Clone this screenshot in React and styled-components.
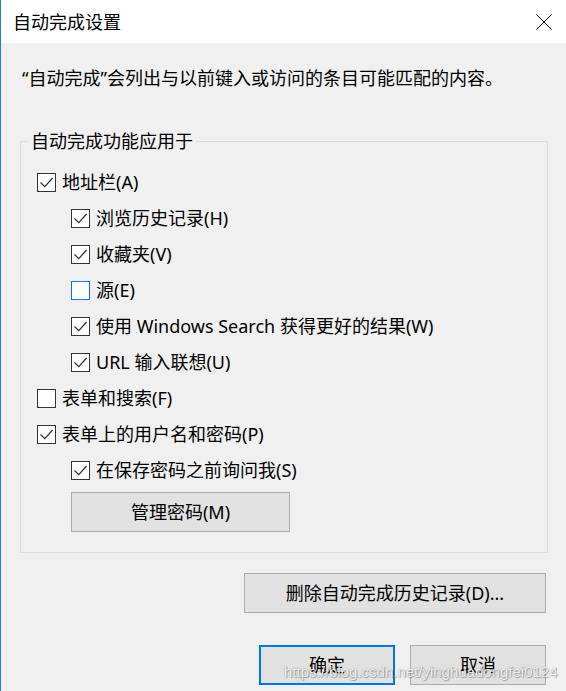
import React from 'react'
import styled, { createGlobalStyle } from 'styled-components'

const GlobalStyle = createGlobalStyle`
  html, body {
    margin: 0;
    padding: 0;
    background: #f0f0f0;
  }
  body {
    font-family: "Noto Sans", "Noto Sans CJK SC", sans-serif;
  }
`

const Window = styled.div`
  position: relative;
  width: 566px;
  height: 691px;
  box-sizing: border-box;
  border-left: 1px solid #1883d7;
  background: #f0f0f0;
  color: #000;
  display: flex;
  flex-direction: column;
  overflow: hidden;
`

const TitleBar = styled.div`
  height: 43px;
  flex-shrink: 0;
  background: #fff;
  display: flex;
  align-items: center;
  justify-content: space-between;
  padding: 0 14px 0 12px;
  font-size: 18px;
  line-height: 24px;
`

const CloseIcon = styled.svg`
  width: 16px;
  height: 16px;
  display: block;
`

const Description = styled.p`
  margin: 23px 0 0 21px;
  font-size: 18px;
  line-height: 24px;
`

const Group = styled.fieldset`
  box-sizing: border-box;
  width: 528px;
  min-width: 0;
  margin: 39px 0 0 19px;
  padding: 11px 0 20px 0;
  border: 1px solid #dcdcdc;
`

const Legend = styled.legend`
  margin-left: 7px;
  padding: 0 3px;
  font-size: 18px;
  line-height: 24px;
`

const Row = styled.label`
  display: flex;
  align-items: center;
  height: 36px;
  padding-left: ${p => 16 + p.$level * 34}px;
  font-size: 18px;
  line-height: 24px;
`

const Box = styled.span`
  box-sizing: border-box;
  width: 19px;
  height: 19px;
  flex-shrink: 0;
  background: #fff;
  border: 1px solid ${p => (p.$focus ? '#0078d7' : '#333')};
  display: flex;
  align-items: center;
  justify-content: center;
`

const RowText = styled.span`
  margin-left: 6px;
  white-space: nowrap;
`

const Button = styled.button`
  box-sizing: border-box;
  height: 40px;
  width: ${p => p.$width}px;
  padding: 0;
  background: #e1e1e1;
  border: ${p => (p.$primary ? '2px solid #0078d7' : '1px solid #adadad')};
  font-family: inherit;
  font-size: 18px;
  line-height: 24px;
  color: #000;
`

const ManageButton = styled(Button)`
  display: block;
  margin: 4px 0 0 50px;
`

const DeleteButton = styled(Button)`
  align-self: flex-end;
  margin: 20px 20px 0 0;
`

const Footer = styled.div`
  display: flex;
  justify-content: flex-end;
  gap: 15px;
  margin: 32px 20px 0 0;
`

const Watermark = styled.div`
  position: absolute;
  left: 283px;
  top: 661px;
  font-family: "Liberation Sans", Arial, sans-serif;
  font-size: 15px;
  line-height: 22px;
  color: rgba(255, 255, 255, 0.9);
  text-shadow: 0 0 1px rgba(0, 0, 0, 0.45), 1px 1px 1px rgba(0, 0, 0, 0.25);
  pointer-events: none;
  white-space: nowrap;
`

const items = [
  { level: 0, checked: true, text: '地址栏(A)' },
  { level: 1, checked: true, text: '浏览历史记录(H)' },
  { level: 1, checked: true, text: '收藏夹(V)' },
  { level: 1, checked: false, focus: true, text: '源(E)' },
  { level: 1, checked: true, text: '使用 Windows Search 获得更好的结果(W)' },
  { level: 1, checked: true, text: 'URL 输入联想(U)' },
  { level: 0, checked: false, text: '表单和搜索(F)' },
  { level: 0, checked: true, text: '表单上的用户名和密码(P)' },
  { level: 1, checked: true, text: '在保存密码之前询问我(S)' },
]

function CheckMark() {
  return (
    <svg width="17" height="17" viewBox="1 1 17 17">
      <polyline
        points="3.5,9.5 7.8,13.6 15.6,5"
        fill="none"
        stroke="#333"
        strokeWidth="1.3"
      />
    </svg>
  )
}

function CheckRow({ level, checked, focus, text }) {
  return (
    <Row $level={level}>
      <Box $focus={focus}>{checked && <CheckMark />}</Box>
      <RowText>{text}</RowText>
    </Row>
  )
}

export default function App() {
  return (
    <>
      <GlobalStyle />
      <Window>
        <TitleBar>
          <span>自动完成设置</span>
          <CloseIcon viewBox="0 0 16 16">
            <path d="M0.5 0.5 L15.5 15.5 M15.5 0.5 L0.5 15.5" stroke="#000" strokeWidth="1" />
          </CloseIcon>
        </TitleBar>

        <Description>“自动完成”会列出与以前键入或访问的条目可能匹配的内容。</Description>

        <Group>
          <Legend>自动完成功能应用于</Legend>
          {items.map((item, i) => (
            <CheckRow key={i} {...item} />
          ))}
          <ManageButton $width={219}>管理密码(M)</ManageButton>
        </Group>

        <DeleteButton $width={302}>删除自动完成历史记录(D)...</DeleteButton>

        <Footer>
          <Button $width={136} $primary>确定</Button>
          <Button $width={136}>取消</Button>
        </Footer>

        <Watermark>https://blog.csdn.net/yinghuadongfei0124</Watermark>
      </Window>
    </>
  )
}
